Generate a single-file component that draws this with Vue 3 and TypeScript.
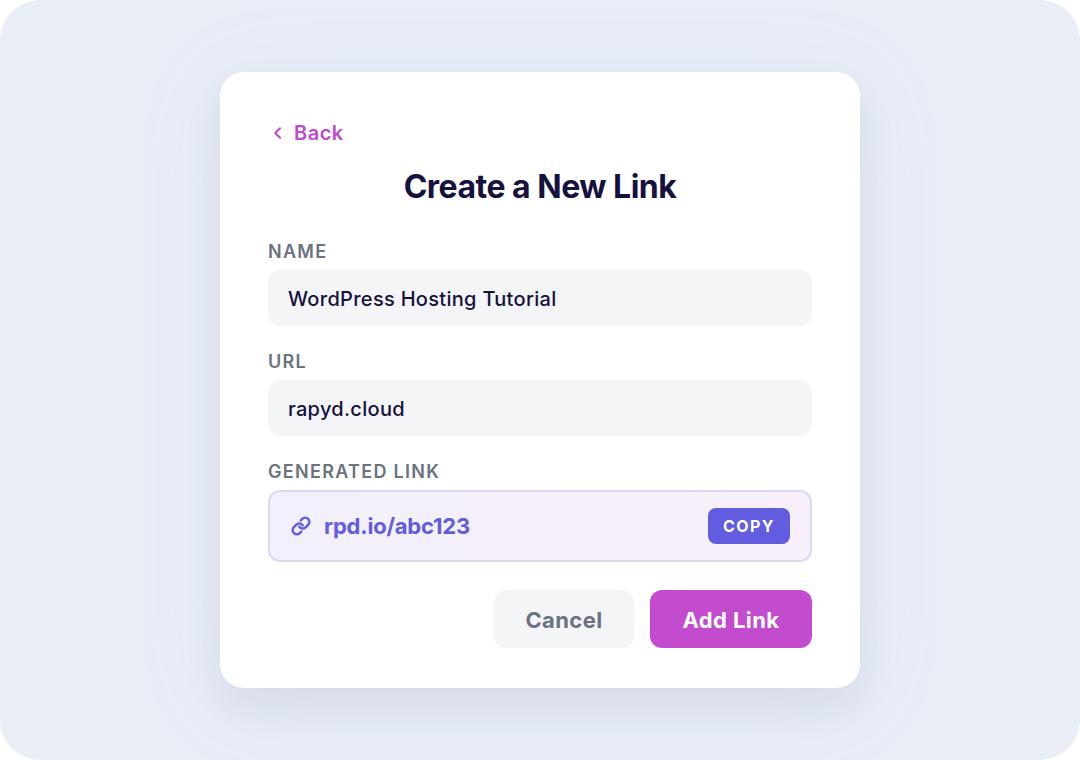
<script setup lang="ts">
const fields = [
  { label: 'NAME', value: 'WordPress Hosting Tutorial' },
  { label: 'URL', value: 'rapyd.cloud' },
]
</script>

<template>
  <div class="page">
    <div class="card">
      <div class="back">
        <svg class="chev" width="18" height="18" viewBox="0 0 18 18" fill="none"><path d="M12 4.2 7.2 9l4.8 4.8" stroke="currentColor" stroke-width="2" stroke-linecap="round" stroke-linejoin="round"/></svg>
        <span>Back</span>
      </div>
      <h1>Create a New Link</h1>
      <div v-for="f in fields" :key="f.label" class="field">
        <div class="label">{{ f.label }}</div>
        <div class="input">{{ f.value }}</div>
      </div>
      <div class="label">GENERATED LINK</div>
      <div class="gen">
        <svg width="20" height="20" viewBox="0 0 24 24" fill="none" stroke="currentColor" stroke-width="3" stroke-linecap="round" stroke-linejoin="round" class="link"><path d="M10 13a5 5 0 0 0 7.54.54l3-3a5 5 0 0 0-7.07-7.07l-1.72 1.71"/><path d="M14 11a5 5 0 0 0-7.54-.54l-3 3a5 5 0 0 0 7.07 7.07l1.71-1.71"/></svg>
        <span class="genurl">rpd.io/abc123</span>
        <span class="copy">COPY</span>
      </div>
      <div class="actions">
        <div class="btn cancel">Cancel</div>
        <div class="btn add">Add Link</div>
      </div>
    </div>
  </div>
</template>

<style>
html, body { margin: 0; background: #fff; }
</style>

<style scoped>
.page {
  width: 1080px; height: 760px; box-sizing: border-box;
  background: #e8edf6; border-radius: 40px;
  display: flex; justify-content: center; padding-top: 72px;
  font-family: Inter, "Liberation Sans", sans-serif;
  overflow: hidden;
}
.card {
  width: 640px; height: 616px; box-sizing: border-box;
  background: #fff; border-radius: 24px; padding: 48px;
  box-shadow: 0 20px 40px rgba(40, 40, 70, 0.07), 0 12px 90px rgba(170, 200, 235, 0.1);
}
.back {
  display: flex; align-items: center; gap: 8px; height: 26px;
  color: #c04acd; font-size: 20px; font-weight: 600; letter-spacing: 0.5px;
}
.chev { width: 18px; height: 18px; }
h1 {
  margin: 21px 0 33px; height: 40px; line-height: 40px; text-align: center;
  font-size: 32px; font-weight: 700; color: #17113f; letter-spacing: -0.5px;
}
.field { margin-bottom: 24px; }
.label {
  font-size: 18px; line-height: 24px; font-weight: 600; color: #6b7280;
  letter-spacing: 1.3px; margin-bottom: 6px;
}
.input {
  height: 56px; line-height: 58px; background: #f3f5f7; border-radius: 12px;
  padding: 0 20px; font-size: 20px; font-weight: 500; color: #17113f; letter-spacing: 0.3px;
}
.gen {
  height: 72px; box-sizing: border-box; border: 2px solid #ddd6f3; border-radius: 12px;
  background: linear-gradient(90deg, #f2f0fc, #f8effa);
  display: flex; align-items: center; padding: 0 20px 0 21px; gap: 13px; color: #615ce0;
}
.link { flex: none; }
.genurl { font-size: 22px; font-weight: 700; flex: 1; letter-spacing: -0.2px; }
.copy {
  background: #615ce0; color: #fff; border-radius: 8px;
  width: 82px; height: 36px; line-height: 36px; text-align: center;
  font-size: 16px; font-weight: 700; letter-spacing: 1.4px;
}
.actions { display: flex; justify-content: flex-end; gap: 16px; margin-top: 28px; }
.btn {
  height: 58px; line-height: 60px; border-radius: 12px; text-align: center;
  font-size: 22px; font-weight: 700; letter-spacing: 0.4px;
}
.cancel { width: 140px; background: #f3f5f7; color: #6b7280; }
.add { width: 162px; background: #c24bce; color: #fff; }
</style>
